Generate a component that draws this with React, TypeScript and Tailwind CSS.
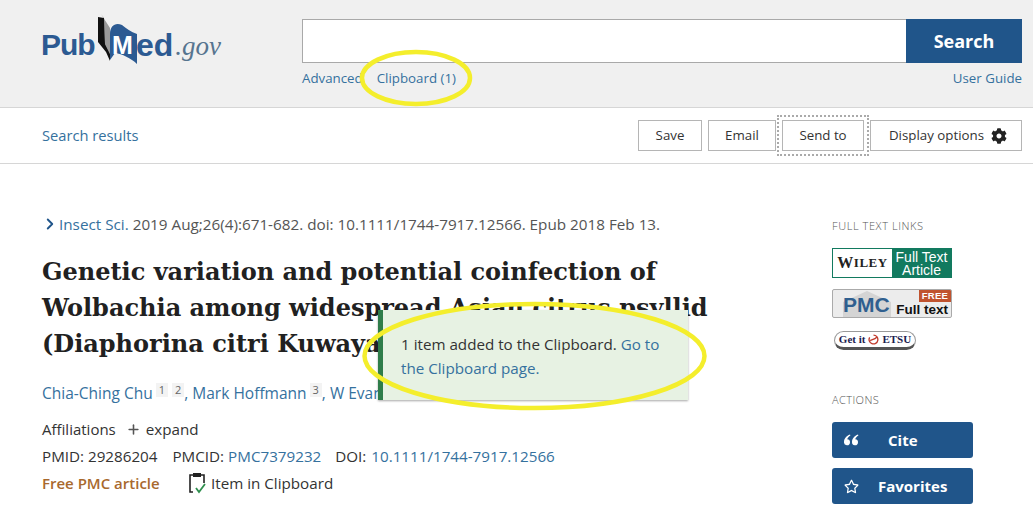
import React from 'react'
import { Plus, ChevronRight } from 'lucide-react'
import { FaCog, FaRegStar } from 'react-icons/fa'

const sans = "font-['Open_Sans','Noto_Sans',sans-serif]"

function Logo() {
  return (
    <div className="flex items-end h-[58px] w-[190px] relative">
      <span className="w-[57px] font-['Liberation_Sans',sans-serif] font-bold text-[30px] leading-[40px] text-[#2c5a92] tracking-[-1px]">Pub</span>
      <svg width="39" height="50" viewBox="0 0 39 50" className="mb-[1px] shrink-0">
        <path d="M3 0 L12 14 L12 40 L7 30 L6 4 Z" fill="#9a9a9a" />
        <path d="M0 3 L6 4 L7 30 L12 40 L12 47 L8 38 L0 28 Z" fill="#111" />
        <path d="M12 46 L12 20 C12 11 18 8 24 11 C28 14 33 18 39 20 L39 50 C33 44 24 40 17 39 Z" fill="#2c5a92" />
      </svg>
      <span className="absolute left-[71px] top-[24px] font-['Liberation_Sans',sans-serif] font-bold text-[25px] leading-[28px] text-white">M</span>
      <span className="font-['Liberation_Sans',sans-serif] font-bold text-[32px] leading-[40px] text-[#2c5a92] -ml-[1px]">ed</span>
      <span className="font-['Liberation_Serif',serif] italic text-[27px] leading-[38px] text-[#56748f] ml-[2px]">.gov</span>
    </div>
  )
}

function ToolButton({ label, className }: { label: string; className: string }) {
  return (
    <button className={`h-[31px] border border-[#b5b5b5] bg-white text-[13.3px] text-[#333] flex items-center justify-center ${className}`}>
      {label}
    </button>
  )
}

function ClipboardCheck() {
  return (
    <svg width="20" height="22" viewBox="0 0 20 22" fill="none">
      <path d="M6 3 H3 V20 H6 M14 3 H17 V11" stroke="#222" strokeWidth="1.6" />
      <rect x="6" y="1" width="8" height="4" fill="#222" />
      <path d="M9 16 L12 20 L18 12" stroke="#2f8f4e" strokeWidth="1.8" />
    </svg>
  )
}

function QuoteIcon() {
  return (
    <svg width="15" height="12" viewBox="0 0 15 12" fill="white" className="ml-[12px] mr-[29px] shrink-0">
      <path d="M6 0.5 C2.5 2 0 4.5 0 8 A3 3 0 1 0 3.2 5.2 C3.6 3.8 4.8 2.4 6.4 1.4 Z" />
      <path d="M14 0.5 C10.5 2 8 4.5 8 8 A3 3 0 1 0 11.2 5.2 C11.6 3.8 12.8 2.4 14.4 1.4 Z" />
    </svg>
  )
}

function Sup({ n, className }: { n: string; className: string }) {
  return <span className={`-mt-[8px] px-[3px] bg-[#f3f3f3] text-[11px] leading-[14px] text-[#666] ${className}`}>{n}</span>
}

export default function App() {
  return (
    <div className={`relative h-[512px] w-[1033px] overflow-hidden bg-white ${sans} text-[#333]`}>
      <header className="h-[108px] bg-[#f0f0f0] border-b border-[#d6d6d6] flex">
        <div className="w-[302px] pl-[41px] pt-[7px]">
          <Logo />
        </div>
        <div className="w-[720px] pt-[19px]">
          <div className="flex h-[44px]">
            <input className="flex-1 bg-white border border-[#a9a9a9] border-r-0" />
            <button className="w-[116px] bg-[#20558a] text-white font-bold text-[18px]">Search</button>
          </div>
          <div className="flex justify-between mt-[5px] text-[13.3px] leading-[20px] text-[#35719e]">
            <div className="flex gap-[14px]">
              <span>Advanced</span>
              <span>Clipboard (1)</span>
            </div>
            <span>User Guide</span>
          </div>
        </div>
      </header>

      <div className="h-[56px] border-b border-[#d6d6d6] flex items-center pl-[42px] pr-[11px]">
        <span className="text-[14.7px] text-[#35719e] flex-1">Search results</span>
        <div className="flex items-center">
          <ToolButton label="Save" className="w-[64px]" />
          <ToolButton label="Email" className="w-[68px] ml-[6px]" />
          <div className="ml-[1px] p-[3px] border-2 border-dotted border-[#aaa]">
            <ToolButton label="Send to" className="w-[82px]" />
          </div>
          <button className="h-[31px] w-[152px] ml-[1px] pl-[4px] border border-[#b5b5b5] bg-white text-[13.3px] text-[#333] flex items-center justify-center gap-[7px]">
            Display options
            <FaCog size={16} className="text-[#222]" />
          </button>
        </div>
      </div>

      <div className="flex">
        <main className="w-[790px] pl-[42px] pt-[49px] shrink-0">
          <div className="flex items-center h-[22px] text-[15.25px] text-[#555] whitespace-nowrap">
            <ChevronRight size={18} strokeWidth={2.5} className="text-[#20558a] -ml-[1px] mr-[0px]" />
            <span className="text-[#35719e]">Insect Sci.</span>
            <span className="ml-[4px]">2019 Aug;26(4):671-682. doi: 10.1111/1744-7917.12566. Epub 2018 Feb 13.</span>
          </div>
          <h1 className="mt-[19px] w-[700px] font-['DejaVu_Serif',serif] font-bold text-[24px] leading-[36px] text-[#212121]">
            Genetic variation and potential coinfection of Wolbachia among widespread Asian citrus psyllid (Diaphorina citri Kuwayama) populations
          </h1>
          <div className="mt-[20px] h-[24px] flex items-center text-[15.5px] text-[#35719e] whitespace-nowrap">
            <span>Chia-Ching Chu</span>
            <Sup n="1" className="ml-[3px]" />
            <Sup n="2" className="ml-[4px]" />
            <span>, Mark Hoffmann</span>
            <Sup n="3" className="ml-[3px]" />
            <span>, W Evan Braswell</span>
          </div>
          <div className="mt-[11px] h-[24px] flex items-center text-[15px] text-[#333]">
            <span>Affiliations</span>
            <Plus size={15} strokeWidth={2.5} className="ml-[10px] mr-[5px] text-[#555]" />
            <span className="text-[15.2px]">expand</span>
          </div>
          <div className="h-[24px] mt-[3px] flex items-center text-[15.2px] text-[#333]">
            <span>PMID: 29286204</span>
            <span className="ml-[15px]">PMCID:</span>
            <span className="ml-[4px] text-[#35719e]">PMC7379232</span>
            <span className="ml-[14px]">DOI:</span>
            <span className="ml-[5px] text-[#35719e]">10.1111/1744-7917.12566</span>
          </div>
          <div className="h-[24px] mt-[3px] flex items-center text-[15.2px]">
            <span className="w-[145px] font-semibold text-[15px] text-[#a8692e]">Free PMC article</span>
            <span className="mr-[4px] flex"><ClipboardCheck /></span>
            <span className="text-[#333]">Item in Clipboard</span>
          </div>
        </main>

        <aside className="pl-[42px] pt-[54px]">
          <div className="text-[11px] leading-[16px] tracking-[0.6px] font-light text-[#555]">FULL TEXT LINKS</div>
          <div className="mt-[14px] w-[120px] h-[30px] flex border border-[#127a5f]">
            <div className="w-[59px] bg-white flex items-center justify-center font-['Liberation_Serif',serif] font-bold text-[13px] text-[#222] tracking-[0.5px]"><span className="text-[16px]">W</span>ILEY</div>
            <div className="flex-1 bg-[#127a5f] text-white text-[14px] leading-[13px] text-center pt-[2px] font-['Liberation_Sans',sans-serif] whitespace-nowrap">Full Text<br />Article</div>
          </div>
          <div className="mt-[11px] w-[120px] h-[29px] relative bg-[#ececec] border border-[#aaa] rounded-[2px] overflow-hidden font-['Liberation_Sans',sans-serif]">
            <svg width="56" height="28" viewBox="0 0 56 28" className="absolute left-[6px] top-0">
              <path d="M4 12 L28 1 L52 12 L52 28 L4 28 Z" fill="#d4d4d4" />
            </svg>
            <span className="absolute left-[10px] top-[1px] font-bold text-[21px] leading-[28px] text-[#2f5f8f]">PMC</span>
            <span className="absolute right-0 top-0 w-[32px] h-[12px] bg-[#c0532f] text-white text-[9.5px] leading-[12px] font-bold text-center tracking-[0.3px]">FREE</span>
            <span className="absolute right-[3px] bottom-[0px] text-[13.5px] leading-[15px] font-bold text-[#111]">Full text</span>
          </div>
          <div className="mt-[13px] ml-[2px] w-[82px] h-[19px] rounded-full bg-white border border-[#999] border-b-[3px] border-b-[#555] flex items-center justify-center gap-[3px] font-['Liberation_Serif',serif] font-bold text-[11px] text-[#1c1c50] whitespace-nowrap">
            <span>Get it</span>
            <svg width="11" height="11" viewBox="0 0 10 10" fill="none">
              <path d="M5 1 A4 4 0 1 1 1.5 3 M2 6 C4 5 6 5 8 3" stroke="#c0392b" strokeWidth="1.2" />
            </svg>
            <span>ETSU</span>
          </div>
          <div className="mt-[42px] text-[11px] leading-[16px] tracking-[0.4px] font-light text-[#555]">ACTIONS</div>
          <button className="mt-[14px] w-[141px] h-[36px] bg-[#20558a] rounded-[3px] text-white font-bold text-[15px] flex items-center">
            <QuoteIcon />
            <span>Cite</span>
          </button>
          <button className="mt-[10px] w-[141px] h-[36px] bg-[#20558a] rounded-[3px] text-white font-bold text-[15px] flex items-center">
            <FaRegStar size={15} className="ml-[12px] mr-[19px]" />
            Favorites
          </button>
        </aside>
      </div>

      <div className="absolute left-[378px] top-[310px] w-[310px] h-[90px] bg-[#e7f2e3] border-l-[5px] border-[#2f7d4a] shadow-[0_1px_2px_rgba(0,0,0,0.35)] pl-[18px] pr-[20px] pt-[22px] text-[15.2px] leading-[24px] text-[#333]">
        1 item added to the Clipboard. <span className="text-[#35719e]">Go to the Clipboard page.</span>
      </div>

      <svg className="absolute left-0 top-0 pointer-events-none" width="1033" height="512" viewBox="0 0 1033 512" fill="none">
        <ellipse cx="416" cy="78" rx="54" ry="26" stroke="#f4ee2c" strokeWidth="4.5" />
        <ellipse cx="534.5" cy="356" rx="170" ry="52" stroke="#f4ee2c" strokeWidth="4.5" />
      </svg>
    </div>
  )
}
